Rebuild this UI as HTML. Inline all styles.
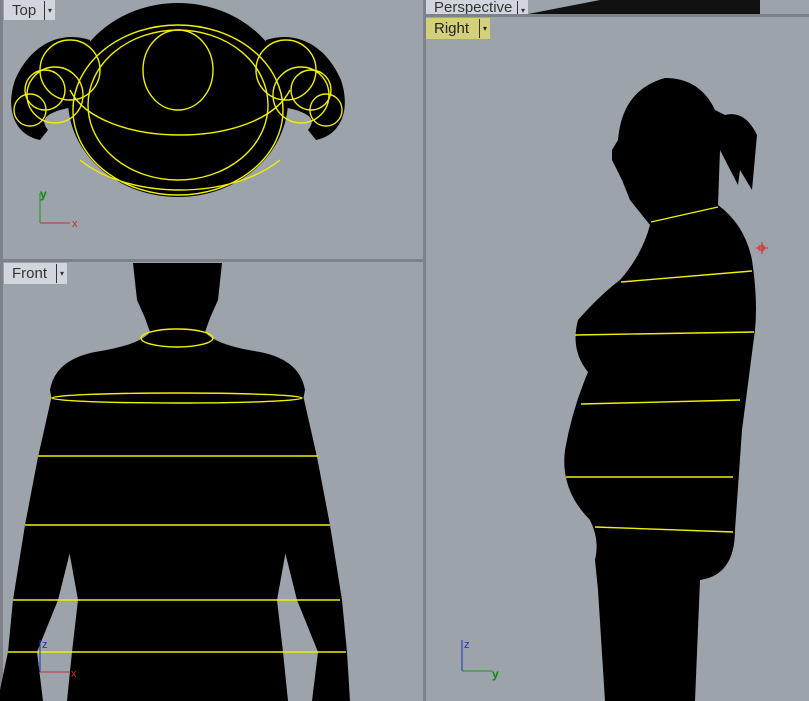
<!DOCTYPE html>
<html><head><meta charset="utf-8"><style>
html,body{margin:0;padding:0;width:809px;height:701px;overflow:hidden;background:#9da3ab;font-family:"Liberation Sans",sans-serif}
.lab{position:absolute;height:21px;background:#d2d6dc;color:#333;font-size:15px;line-height:21px;padding-left:8px;box-sizing:border-box}
.lab span{position:absolute;right:0;top:1px;width:10px;height:19px;border-left:1px solid #333;font-size:8px;line-height:19px;text-align:center}
</style></head><body>
<svg width="809" height="701" style="position:absolute;left:0;top:0">
<rect x="0" y="0" width="809" height="701" fill="#9da3ab"/>
<!-- TOP VIEW -->
<g>
<ellipse cx="178" cy="100" rx="110" ry="97" fill="#000"/>
<path d="M90 40 C60 30 30 45 15 80 C5 110 15 135 40 140 L48 130 C40 120 45 115 60 110 L100 100 Z" fill="#000"/>
<path d="M266 40 C296 30 326 45 341 80 C351 110 341 135 316 140 L308 130 C316 120 311 115 296 110 L256 100 Z" fill="#000"/>
<g fill="none" stroke="#f0f000" stroke-width="1.4">
<ellipse cx="178" cy="70" rx="35" ry="40"/>
<ellipse cx="178" cy="110" rx="105" ry="85"/>
<ellipse cx="178" cy="105" rx="90" ry="75"/>
<path d="M70 90 C100 150 260 150 290 90"/>
<path d="M80 160 C130 200 230 200 280 160"/>
<circle cx="30" cy="110" r="16"/><circle cx="45" cy="90" r="20"/><circle cx="70" cy="70" r="30"/><circle cx="55" cy="95" r="28"/>
<circle cx="326" cy="110" r="16"/><circle cx="311" cy="90" r="20"/><circle cx="286" cy="70" r="30"/><circle cx="301" cy="95" r="28"/>
</g>
<line x1="40" y1="193" x2="40" y2="223" stroke="#1a9a1a"/><line x1="40" y1="223" x2="70" y2="223" stroke="#c03030"/>
<text x="40" y="198" font-size="12" fill="#0a8a0a" font-weight="bold">y</text><text x="72" y="227" font-size="11" fill="#c03030">x</text>
</g>
<!-- dividers -->
<rect x="0" y="259" width="424" height="3" fill="#7d8188"/>
<rect x="423" y="0" width="3" height="701" fill="#7d8188"/>
<rect x="424" y="14" width="385" height="3" fill="#7d8188"/>
<rect x="0" y="0" width="3" height="701" fill="#7d8188"/>
<path d="M528 14 L600 0 L760 0 L760 14 Z" fill="#111"/>
<!-- FRONT VIEW -->
<path d="M133 263 L222 263 L218 300 L210 318 L205 332 Q215 345 260 352 Q300 360 305 390 L292 460 L290 528 L277 600 L283 652 L288 701 L67 701 L72 652 L78 600 L65 528 L63 460 L50 390 Q55 360 95 352 Q140 345 150 332 L145 318 L137 300 Z" fill="#000"/>
<path d="M52 395 L38 457 L25 525 L13 600 L8 652 L0 690 L0 701 L43 701 L37 652 L58 600 L76 528 L88 460 L88 400 Z" fill="#000"/>
<path d="M303 395 L317 457 L330 525 L342 600 L347 652 L350 701 L312 701 L318 652 L297 600 L279 528 L267 460 L267 400 Z" fill="#000"/>
<g fill="none" stroke="#f0f000" stroke-width="1.4">
<ellipse cx="177" cy="338" rx="36" ry="9"/>
<ellipse cx="177" cy="398" rx="125" ry="5"/>
<line x1="38" y1="456" x2="318" y2="456"/>
<line x1="25" y1="525" x2="330" y2="525"/>
<line x1="13" y1="600" x2="340" y2="600"/>
<line x1="8" y1="652" x2="346" y2="652"/>
</g>
<line x1="40" y1="640" x2="40" y2="672" stroke="#2030c0"/><line x1="40" y1="672" x2="70" y2="672" stroke="#c03030"/>
<text x="42" y="648" font-size="11" fill="#2030c0">z</text><text x="71" y="677" font-size="11" fill="#c03030">x</text>
<!-- RIGHT VIEW -->
<path d="M665 78 Q700 78 715 110 L725 115 Q745 110 757 135 L752 190 L740 170 L738 185 L720 150 L718 205 Q745 225 752 260 Q758 300 755 330 L742 430 L735 530 Q735 575 700 580 L695 701 L605 701 L598 590 L595 560 Q600 540 590 520 Q560 490 565 450 Q572 410 588 372 Q570 350 578 320 Q600 295 620 280 Q642 255 650 225 L630 200 L622 180 L612 160 L612 150 L618 140 Q622 90 665 78 Z" fill="#000"/>
<g fill="none" stroke="#f0f000" stroke-width="1.4">
<line x1="651" y1="222" x2="718" y2="207"/>
<line x1="621" y1="282" x2="752" y2="271"/>
<line x1="575" y1="335" x2="754" y2="332"/>
<line x1="581" y1="404" x2="740" y2="400"/>
<line x1="566" y1="477" x2="733" y2="477"/>
<line x1="595" y1="527" x2="733" y2="532"/>
</g>
<g stroke="#e02020" fill="none"><line x1="756" y1="248" x2="768" y2="248"/><line x1="762" y1="242" x2="762" y2="254"/><rect x="759" y="246" width="5" height="4"/></g>
<line x1="462" y1="640" x2="462" y2="671" stroke="#2030c0"/><line x1="462" y1="671" x2="492" y2="671" stroke="#1a9a1a"/>
<text x="464" y="648" font-size="11" fill="#2030c0">z</text><text x="492" y="678" font-size="12" fill="#0a8a0a" font-weight="bold">y</text>
</svg>
<div class="lab" style="left:4px;top:0;width:51px;height:20px">Top<span>▾</span></div>
<div class="lab" style="left:4px;top:263px;width:63px">Front<span>▾</span></div>
<div class="lab" style="left:426px;top:0;width:102px;height:14px;line-height:16px;overflow:hidden">Perspective<span>▾</span></div>
<div class="lab" style="left:426px;top:18px;width:64px;background:#d4d07a;color:#222">Right<span>▾</span></div>
</body></html>
